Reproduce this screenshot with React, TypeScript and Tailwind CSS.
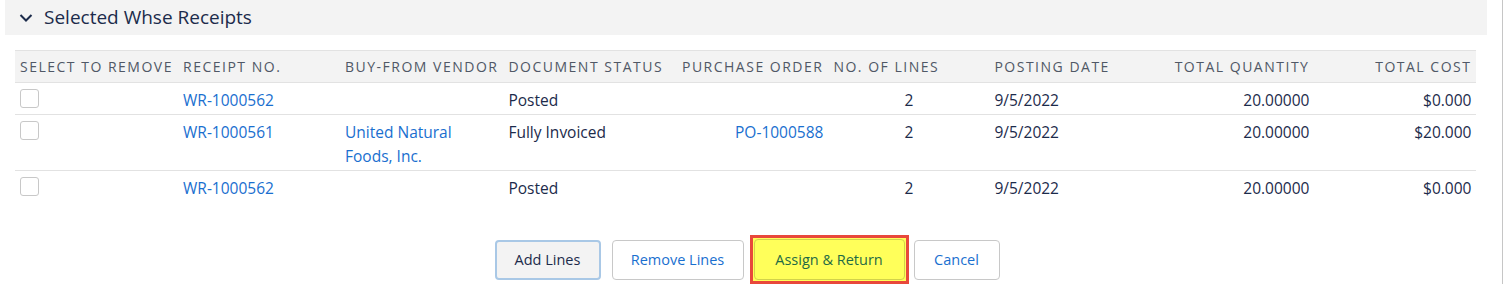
import React from "react";

type Row = {
  receipt: string;
  vendor?: string[];
  status: string;
  po?: string;
  lines: number;
  date: string;
  qty: string;
  cost: string;
};

const rows: Row[] = [
  { receipt: "WR-1000562", status: "Posted", lines: 2, date: "9/5/2022", qty: "20.00000", cost: "$0.000" },
  {
    receipt: "WR-1000561",
    vendor: ["United Natural", "Foods, Inc."],
    status: "Fully Invoiced",
    po: "PO-1000588",
    lines: 2,
    date: "9/5/2022",
    qty: "20.00000",
    cost: "$20.000",
  },
  { receipt: "WR-1000562", status: "Posted", lines: 2, date: "9/5/2022", qty: "20.00000", cost: "$0.000" },
];

const font = { fontFamily: '"Open Sans", "Noto Sans", sans-serif' };

const th = "px-[5px] text-left font-normal uppercase whitespace-nowrap";
const td = "px-[5px] pt-[5px] pb-[2px] align-top";

export default function App() {
  return (
    <div className="h-[284px] w-[1504px] overflow-hidden bg-white" style={font}>
      <div className="h-full w-[1503px] border-r border-[#c6c6c6]">
        <div className="pl-[5px] pr-[15px]">
          <div className="flex h-[35px] items-center bg-[#f3f3f3] pl-[14px]">
            <svg width="14" height="10" viewBox="0 0 14 10" className="mr-[11px]">
              <path d="M1.5 2l5.5 5.5L12.5 2" fill="none" stroke="#1c2b4b" strokeWidth="2" />
            </svg>
            <span className="text-[19px] text-[#1c2b4b]">Selected Whse Receipts</span>
          </div>
        </div>

        <div className="pl-[15px] pt-[15px]">
          <table className="table-fixed border-collapse text-[15.5px] leading-[24px] text-[#1c2b4b]">
            <colgroup>
              <col className="w-[163px]" />
              <col className="w-[162px]" />
              <col className="w-[163px]" />
              <col className="w-[172px]" />
              <col className="w-[153px]" />
              <col className="w-[161px]" />
              <col className="w-[161px]" />
              <col className="w-[164px]" />
              <col className="w-[162px]" />
            </colgroup>
            <thead>
              <tr className="h-[32px] border-y border-[#e2e2e2] bg-[#f3f3f3] text-[14px] tracking-[1.5px] text-[#505866]">
                <th className={th}>Select to Remove</th>
                <th className={th}>Receipt No.</th>
                <th className={th}>Buy-from Vendor</th>
                <th className={th}>Document Status</th>
                <th className={th + " !text-right"}>Purchase Order</th>
                <th className={th}>No. of Lines</th>
                <th className={th}>Posting Date</th>
                <th className={th + " !text-right"}>Total Quantity</th>
                <th className={th + " !text-right"}>Total Cost</th>
              </tr>
            </thead>
            <tbody>
              {rows.map((r, i) => (
                <tr key={i} className={i < rows.length - 1 ? "border-b border-[#e2e2e2]" : ""}>
                  <td className={td}>
                    <div className="mt-[1px] h-[19px] w-[19px] rounded-[3px] border border-[#c8c8c8] bg-white" />
                  </td>
                  <td className={td + " text-[#1a6fcf]"}>{r.receipt}</td>
                  <td className={td + " text-[#1a6fcf]"}>
                    {r.vendor?.map((v) => (
                      <div key={v}>{v}</div>
                    ))}
                  </td>
                  <td className={td}>{r.status}</td>
                  <td className={td + " text-right text-[#1a6fcf]"}>{r.po}</td>
                  <td className={td + " text-center"}>{r.lines}</td>
                  <td className={td}>{r.date}</td>
                  <td className={td + " text-right"}>{r.qty}</td>
                  <td className={td + " text-right"}>{r.cost}</td>
                </tr>
              ))}
            </tbody>
          </table>

          <div className="mt-[33px] flex w-[1461px] items-center justify-center pl-[3px] text-[14.5px]">
            <button className="h-[40px] w-[106px] rounded-[4px] border-2 border-[#a9c8e6] bg-[#f3f3f3] text-[#1c2b4b]">
              Add Lines
            </button>
            <button className="ml-[11px] h-[40px] w-[132px] rounded-[4px] border border-[#c8c8c8] bg-white text-[#1a6fcf]">
              Remove Lines
            </button>
            <div className="ml-[6px] border-[3px] border-[#e8483b] bg-[#ffff5a] p-[1px]">
              <button className="h-[41px] w-[151px] rounded-[4px] border border-[#d2d24a] bg-[#ffff5a] text-[#1f6b45]">
                Assign &amp; Return
              </button>
            </div>
            <button className="ml-[5px] h-[40px] w-[86px] rounded-[4px] border border-[#c8c8c8] bg-white text-[#1a6fcf]">
              Cancel
            </button>
          </div>
        </div>
      </div>
    </div>
  );
}
